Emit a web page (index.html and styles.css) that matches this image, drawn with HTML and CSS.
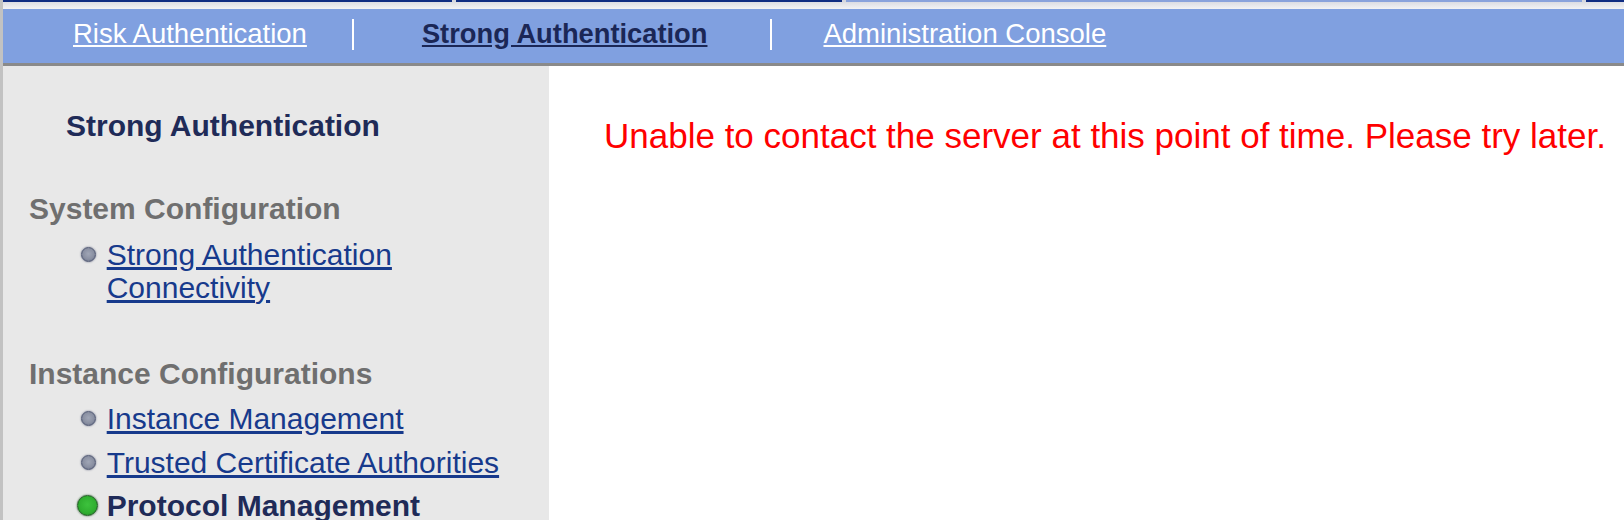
FILE: index.html
```html
<!DOCTYPE html>
<html lang="en">
<head>
    <meta charset="UTF-8">
    <title>Strong Authentication - Protocol Management</title>
    <link rel="stylesheet" href="styles.css">
</head>
<body>
    <div class="page">
        <div class="tab-strip">
            <div class="tab tab-dark tab-1"></div>
            <div class="tab tab-dark tab-2"></div>
            <div class="tab tab-light tab-3"></div>
            <div class="tab tab-dark tab-4"></div>
        </div>
        <div class="tab-shine"></div>

        <div class="nav">
            <a class="nav-link nav-risk" href="#">Risk Authentication</a>
            <span class="nav-sep sep-1"></span>
            <a class="nav-link nav-active" href="#">Strong Authentication</a>
            <span class="nav-sep sep-2"></span>
            <a class="nav-link nav-admin" href="#">Administration Console</a>
        </div>

        <div class="layout">
            <div class="sidebar">
                <div class="side-title">Strong Authentication</div>

                <div class="group">
                    <div class="group-title">System Configuration</div>
                    <ul class="menu">
                        <li class="menu-item">
                            <span class="bullet"><span class="dot"></span></span>
                            <a href="#">Strong Authentication<br>Connectivity</a>
                        </li>
                    </ul>
                </div>

                <div class="group">
                    <div class="group-title">Instance Configurations</div>
                    <ul class="menu">
                        <li class="menu-item">
                            <span class="bullet"><span class="dot"></span></span>
                            <a href="#">Instance Management</a>
                        </li>
                        <li class="menu-item">
                            <span class="bullet"><span class="dot"></span></span>
                            <a href="#">Trusted Certificate Authorities</a>
                        </li>
                        <li class="menu-item current">
                            <span class="bullet"><span class="dot dot-on"></span></span>
                            <span class="current-label">Protocol Management</span>
                        </li>
                    </ul>
                </div>
            </div>

            <div class="content">
                <p class="error-msg">Unable to contact the server at this point of time. Please try later.</p>
            </div>
        </div>
    </div>
</body>
</html>
```

FILE: styles.css
```css
html, body {
    margin: 0;
    padding: 0;
    height: 100%;
    overflow: hidden;
}
body {
    font-family: "Liberation Sans", Arial, sans-serif;
    background: #ffffff;
}
.page {
    height: 100vh;
    display: flex;
    flex-direction: column;
    border-left: 3px solid #c2c2c2;
    overflow: hidden;
}

/* top tab strip */
.tab-strip {
    display: flex;
    gap: 4px;
    height: 2px;
    background: #d6d8de;
}
.tab-dark {
    background: #0f2c82;
}
.tab-light {
    background: #8aa3dc;
}
.tab-1 { width: 449px; }
.tab-2 { width: 386px; }
.tab-3 { width: 736px; }
.tab-4 { flex: 1; }
.tab-shine {
    height: 7px;
    background: linear-gradient(#dcdde3, #f3f3f5);
}

/* main navigation */
.nav {
    display: flex;
    align-items: center;
    height: 57px;
    padding-left: 70px;
    padding-bottom: 4px;
    box-sizing: border-box;
    background: #80a0e0;
    border-bottom: 3px solid #8a8a8a;
}
.nav-link {
    font-size: 27.5px;
    color: #ffffff;
    text-decoration: underline;
}
.nav-active {
    font-size: 27.3px;
    font-weight: bold;
    color: #1b2756;
}
.nav-sep {
    width: 2px;
    height: 31px;
    background: #ffffff;
}
.sep-1 {
    margin-left: 45px;
    margin-right: 68px;
}
.sep-2 {
    margin-left: 63px;
    margin-right: 51px;
}

/* body */
.layout {
    flex: 1;
    display: flex;
    min-height: 0;
}
.sidebar {
    width: 546px;
    flex-shrink: 0;
    background: #e8e8e8;
    padding-top: 43px;
    box-sizing: border-box;
    font-size: 30px;
    line-height: 33px;
}
.side-title {
    font-weight: bold;
    color: #1f2b58;
    margin: 0 0 50px 63px;
}
.group {
    margin-bottom: 53px;
}
.group-title {
    font-weight: bold;
    color: #6f6f6f;
    margin: 0 0 12.5px 26px;
}
.menu {
    list-style: none;
    margin: 0;
    padding: 0;
}
.menu-item {
    display: flex;
    align-items: flex-start;
    margin-bottom: 10.5px;
    padding-left: 74px;
}
.menu-item a {
    color: #173a8c;
    text-decoration: underline;
}
.bullet {
    width: 22px;
    height: 33px;
    margin-right: 7.7px;
    display: flex;
    align-items: center;
    justify-content: center;
}
.dot {
    width: 13px;
    height: 13px;
    border-radius: 50%;
    border: 1px solid #4f5772;
    background: radial-gradient(circle at 50% 45%, #a0a6b6 0%, #8a90a2 55%, #5d6680 100%);
    box-shadow: 0 0 2px #6a7088;
}
.dot-on {
    width: 19px;
    height: 19px;
    border-color: #1f5a22;
    background: radial-gradient(circle at 50% 45%, #3dc23d 0%, #2fae2f 60%, #22792a 100%);
    box-shadow: 0 0 2px #2a5a2a;
    margin-left: -2px;
}
.current-label {
    font-weight: bold;
    color: #1f2b58;
}

.content {
    flex: 1;
    padding: 50px 0 0 55px;
}
.error-msg {
    margin: 0;
    font-size: 35px;
    line-height: 40px;
    color: #ff0000;
}
```
